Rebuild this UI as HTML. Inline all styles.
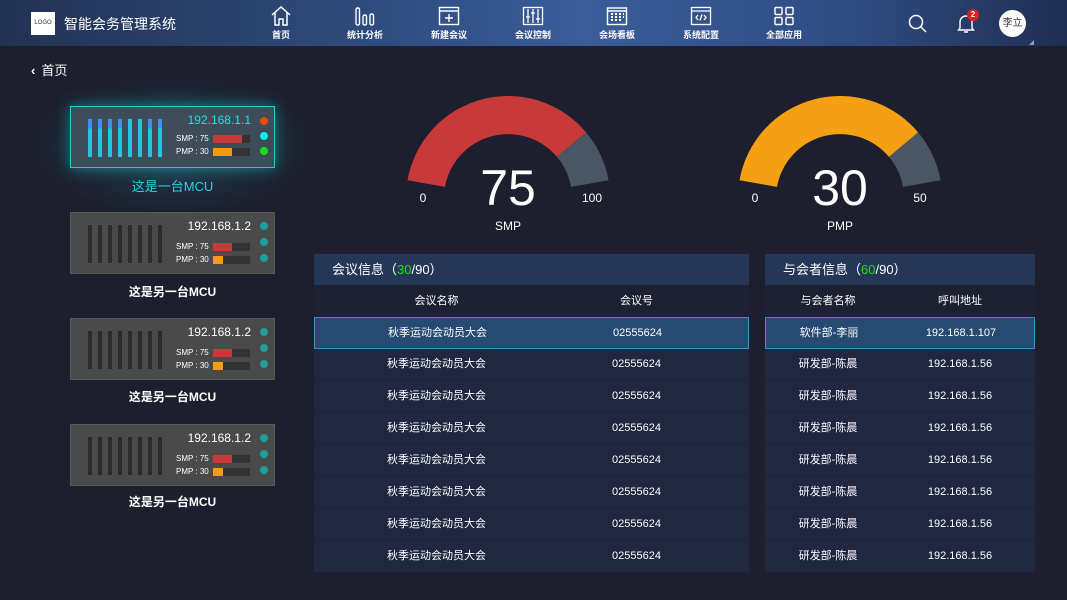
<!DOCTYPE html>
<html><head><meta charset="utf-8"><style>
*{margin:0;padding:0;box-sizing:border-box}
body{width:1067px;height:600px;overflow:hidden;background:#1d1f2e;font-family:"Liberation Sans","Noto Sans CJK SC",sans-serif;color:#fff;position:relative}
.hdr{position:absolute;left:0;top:0;width:1067px;height:46px;background:linear-gradient(90deg,#223253 0%,#2d4878 30%,#3a5c98 55%,#2f4b82 80%,#1f2f52 100%)}
.logo{position:absolute;left:31px;top:12px;width:24px;height:23px;background:#fff;color:#333;font-size:6px;line-height:23px;text-align:center}
.title{position:absolute;left:64px;top:14px;font-size:14px;color:#fff}
.nav{position:absolute;top:6px;width:60px;text-align:center;font-size:9px;font-weight:bold}
.nav svg{display:block;margin:0 auto 2px}
.abs{position:absolute}
.card{position:absolute;left:70px;width:205px;height:62px;background:#4a4a4a;border:1px solid #5a5a5a}
.card .bars{position:absolute;left:17px;top:12px}
.card .bars i{position:absolute;top:0;width:4px;height:38px;background:#2c2c2c}
.ip{position:absolute;right:23px;top:6px;font-size:12px}
.lb{position:absolute;left:105px;font-size:8px}
.bar{position:absolute;left:142px;width:37px;height:8px;background:#333}
.dot{position:absolute;right:6px;width:8px;height:8px;border-radius:50%;background:#1e9e9e}
.cap{position:absolute;left:70px;width:205px;text-align:center;font-size:12px;font-weight:bold}
.tbl{position:absolute;top:254px}
.tt{height:31px;background:#253757;font-size:13px;line-height:31px;padding-left:18px}
.th{height:32px;line-height:32px;font-size:11px;position:relative}
.row{height:32px;line-height:31px;font-size:11px;position:relative;background:#212740;border-bottom:1px solid #1c2135}
.row.sel{background:#264a72;border:1px solid #3a8fd0}
.c{position:absolute;text-align:center}
</style></head><body>
<div class="hdr">
<div class="logo">LOGO</div>
<div class="title">智能会务管理系统</div>
<div class="nav" style="left:251px"><svg width="22" height="20" viewBox="0 0 22 20" fill="none" stroke="#fff" stroke-width="1.5"><path d="M2 9L11 1L20 9M5 7V19H9V13H13V19H17V7"/></svg>首页</div>
<div class="nav" style="left:335px"><svg width="22" height="20" viewBox="0 0 22 20" fill="none" stroke="#fff" stroke-width="1.4"><rect x="2" y="2" width="3.5" height="17" rx="1.5"/><rect x="9" y="9" width="3.5" height="10" rx="1.5"/><rect x="16" y="8" width="3.5" height="11" rx="1.5"/></svg>统计分析</div>
<div class="nav" style="left:419px"><svg width="22" height="20" viewBox="0 0 22 20" fill="none" stroke="#fff" stroke-width="1.4"><rect x="1.5" y="1.5" width="19" height="17"/><path d="M1.5 5H20.5M11 8V16M7 12H15"/></svg>新建会议</div>
<div class="nav" style="left:503px"><svg width="22" height="20" viewBox="0 0 22 20" fill="none" stroke="#fff" stroke-width="1.3"><rect x="1.5" y="1.5" width="19" height="17"/><path d="M6 3V17M11 3V17M16 3V17M4 11H8M9 7H13M14 13H18"/></svg>会议控制</div>
<div class="nav" style="left:587px"><svg width="22" height="20" viewBox="0 0 22 20" fill="none" stroke="#fff" stroke-width="1.4"><rect x="1.5" y="2" width="19" height="16.5"/><path d="M1.5 5H20.5" /><path d="M5 8h2M9 8h2M13 8h2M17 8h1M5 11h2M9 11h2M13 11h2M17 11h1M5 14h2M9 14h2M13 14h2" stroke-width="2"/></svg>会场看板</div>
<div class="nav" style="left:671px"><svg width="22" height="20" viewBox="0 0 22 20" fill="none" stroke="#fff" stroke-width="1.3"><rect x="1.5" y="1.5" width="19" height="17"/><path d="M1.5 5H20.5M8 9L6 11.5L8 14M14 9L16 11.5L14 14M12 8.5L10 14.5"/></svg>系统配置</div>
<div class="nav" style="left:754px"><svg width="22" height="20" viewBox="0 0 22 20" fill="none" stroke="#fff" stroke-width="1.4"><rect x="2" y="1.5" width="7" height="7" rx="1"/><rect x="13" y="1.5" width="7" height="7" rx="1"/><rect x="2" y="11.5" width="7" height="7" rx="1"/><rect x="13" y="11.5" width="7" height="7" rx="1"/></svg>全部应用</div>
<svg class="abs" style="left:908px;top:14px" width="20" height="20" fill="none" stroke="#fff" stroke-width="1.5"><circle cx="8" cy="8" r="6.5"/><path d="M13 13L18 18"/></svg>
<svg class="abs" style="left:956px;top:13px" width="20" height="22" fill="none" stroke="#fff" stroke-width="1.4"><path d="M4 15V9a6 6 0 0 1 12 0v6l1.5 2h-15z M8 19h4"/></svg>
<div class="abs" style="left:967px;top:9px;width:12px;height:12px;border-radius:50%;background:#e21c1c;font-size:8px;font-weight:bold;text-align:center;line-height:12px">2</div>
<div class="abs" style="left:999px;top:10px;width:27px;height:27px;border-radius:50%;background:#fff;color:#333;font-size:10px;text-align:center;line-height:27px">李立</div>
<div class="abs" style="left:1029px;top:40px;width:0;height:0;border-left:5px solid transparent;border-bottom:5px solid #8fa0bf"></div>
</div>

<div class="abs" style="left:31px;top:60px;font-size:13px"><span style="font-weight:bold;margin-right:6px">&#8249;</span>首页</div>

<div class="abs" style="left:40px;top:80px;width:265px;height:130px;background:radial-gradient(ellipse at center,rgba(40,140,160,.45) 0%,rgba(30,90,110,.2) 50%,rgba(29,31,46,0) 75%)"></div>
<div class="card" style="top:106px;background:#3e4b58;border:1px solid #18d2d8;box-shadow:0 0 14px rgba(24,210,216,.5)">
<div class="bars"><i style="left:0;background:linear-gradient(#3a8ff0 25%,#1fc8e0 25%)"></i><i style="left:10px;background:linear-gradient(#3a8ff0 25%,#1fc8e0 25%)"></i><i style="left:20px;background:linear-gradient(#3a8ff0 25%,#1fc8e0 25%)"></i><i style="left:30px;background:linear-gradient(#3a8ff0 25%,#1fc8e0 25%)"></i><i style="left:40px;background:#1fc8e0"></i><i style="left:50px;background:#1fc8e0"></i><i style="left:60px;background:linear-gradient(#3a8ff0 25%,#1fc8e0 25%)"></i><i style="left:70px;background:linear-gradient(#3a8ff0 25%,#1fc8e0 25%)"></i></div>
<div class="ip" style="color:#1fe0e8">192.168.1.1</div>
<div class="lb" style="top:27px">SMP : 75</div><div class="bar" style="top:28px"><div style="width:29px;height:8px;background:#c8393a"></div></div>
<div class="lb" style="top:40px">PMP : 30</div><div class="bar" style="top:41px"><div style="width:19px;height:8px;background:#f59c10"></div></div>
<div class="dot" style="top:10px;background:#f04a0e"></div><div class="dot" style="top:25px;background:#12e8f4"></div><div class="dot" style="top:40px;background:#18e018"></div>
</div>
<div class="cap" style="top:176px;color:#1fd8e2;font-weight:normal;font-size:13px">这是一台MCU</div>

<div class="card" style="top:212px"><div class="bars"><i style="left:0"></i><i style="left:10px"></i><i style="left:20px"></i><i style="left:30px"></i><i style="left:40px"></i><i style="left:50px"></i><i style="left:60px"></i><i style="left:70px"></i></div><div class="ip">192.168.1.2</div><div class="lb" style="top:29px">SMP : 75</div><div class="bar" style="top:30px"><div style="width:19px;height:8px;background:#c8393a"></div></div><div class="lb" style="top:42px">PMP : 30</div><div class="bar" style="top:43px"><div style="width:10px;height:8px;background:#f59c10"></div></div><div class="dot" style="top:9px"></div><div class="dot" style="top:25px"></div><div class="dot" style="top:41px"></div></div>
<div class="cap" style="top:283px">这是另一台MCU</div>
<div class="card" style="top:318px"><div class="bars"><i style="left:0"></i><i style="left:10px"></i><i style="left:20px"></i><i style="left:30px"></i><i style="left:40px"></i><i style="left:50px"></i><i style="left:60px"></i><i style="left:70px"></i></div><div class="ip">192.168.1.2</div><div class="lb" style="top:29px">SMP : 75</div><div class="bar" style="top:30px"><div style="width:19px;height:8px;background:#c8393a"></div></div><div class="lb" style="top:42px">PMP : 30</div><div class="bar" style="top:43px"><div style="width:10px;height:8px;background:#f59c10"></div></div><div class="dot" style="top:9px"></div><div class="dot" style="top:25px"></div><div class="dot" style="top:41px"></div></div>
<div class="cap" style="top:388px">这是另一台MCU</div>
<div class="card" style="top:424px"><div class="bars"><i style="left:0"></i><i style="left:10px"></i><i style="left:20px"></i><i style="left:30px"></i><i style="left:40px"></i><i style="left:50px"></i><i style="left:60px"></i><i style="left:70px"></i></div><div class="ip">192.168.1.2</div><div class="lb" style="top:29px">SMP : 75</div><div class="bar" style="top:30px"><div style="width:19px;height:8px;background:#c8393a"></div></div><div class="lb" style="top:42px">PMP : 30</div><div class="bar" style="top:43px"><div style="width:10px;height:8px;background:#f59c10"></div></div><div class="dot" style="top:9px"></div><div class="dot" style="top:25px"></div><div class="dot" style="top:41px"></div></div>
<div class="cap" style="top:493px">这是另一台MCU</div>

<svg class="abs" style="left:0;top:0" width="1067" height="250">
<g font-family="Liberation Sans, sans-serif" fill="#fff" text-anchor="middle">
<path d="M407.5 180.3A102 102 0 0 1 586.1 132.4L557 156.9A64 64 0 0 0 445 186.9Z" fill="#c8393a"/>
<path d="M586.1 132.4A102 102 0 0 1 608.5 180.3L571 186.9A64 64 0 0 0 557 156.9Z" fill="#4a5663"/>
<text x="508" y="205" font-size="50">75</text>
<text x="423" y="202" font-size="12">0</text><text x="592" y="202" font-size="12">100</text>
<text x="508" y="230" font-size="12">SMP</text>
<g transform="translate(332,0)">
<path d="M407.5 180.3A102 102 0 0 1 586.1 132.4L557 156.9A64 64 0 0 0 445 186.9Z" fill="#f5a012"/>
<path d="M586.1 132.4A102 102 0 0 1 608.5 180.3L571 186.9A64 64 0 0 0 557 156.9Z" fill="#4a5663"/>
<text x="508" y="205" font-size="50">30</text>
<text x="423" y="202" font-size="12">0</text><text x="588" y="202" font-size="12">50</text>
<text x="508" y="230" font-size="12">PMP</text>
</g></g></svg>

<div class="tbl" style="left:314px;width:435px">
<div class="tt">会议信息（<span style="color:#1ee01e">30</span>/90）</div>
<div class="th" style="background:#1d2133"><span class="c" style="left:0;width:245px">会议名称</span><span class="c" style="left:245px;width:155px">会议号</span></div>
<div class="row sel"><span class="c" style="left:0;width:245px">秋季运动会动员大会</span><span class="c" style="left:245px;width:155px">02555624</span></div>
<div class="row"><span class="c" style="left:0;width:245px">秋季运动会动员大会</span><span class="c" style="left:245px;width:155px">02555624</span></div>
<div class="row"><span class="c" style="left:0;width:245px">秋季运动会动员大会</span><span class="c" style="left:245px;width:155px">02555624</span></div>
<div class="row"><span class="c" style="left:0;width:245px">秋季运动会动员大会</span><span class="c" style="left:245px;width:155px">02555624</span></div>
<div class="row"><span class="c" style="left:0;width:245px">秋季运动会动员大会</span><span class="c" style="left:245px;width:155px">02555624</span></div>
<div class="row"><span class="c" style="left:0;width:245px">秋季运动会动员大会</span><span class="c" style="left:245px;width:155px">02555624</span></div>
<div class="row"><span class="c" style="left:0;width:245px">秋季运动会动员大会</span><span class="c" style="left:245px;width:155px">02555624</span></div>
<div class="row"><span class="c" style="left:0;width:245px">秋季运动会动员大会</span><span class="c" style="left:245px;width:155px">02555624</span></div>
</div>

<div class="tbl" style="left:765px;width:270px">
<div class="tt">与会者信息（<span style="color:#1ee01e">60</span>/90）</div>
<div class="th" style="background:#1d2133"><span class="c" style="left:0;width:126px">与会者名称</span><span class="c" style="left:126px;width:138px">呼叫地址</span></div>
<div class="row sel"><span class="c" style="left:0;width:126px">软件部-李丽</span><span class="c" style="left:126px;width:138px">192.168.1.107</span></div>
<div class="row"><span class="c" style="left:0;width:126px">研发部-陈晨</span><span class="c" style="left:126px;width:138px">192.168.1.56</span></div>
<div class="row"><span class="c" style="left:0;width:126px">研发部-陈晨</span><span class="c" style="left:126px;width:138px">192.168.1.56</span></div>
<div class="row"><span class="c" style="left:0;width:126px">研发部-陈晨</span><span class="c" style="left:126px;width:138px">192.168.1.56</span></div>
<div class="row"><span class="c" style="left:0;width:126px">研发部-陈晨</span><span class="c" style="left:126px;width:138px">192.168.1.56</span></div>
<div class="row"><span class="c" style="left:0;width:126px">研发部-陈晨</span><span class="c" style="left:126px;width:138px">192.168.1.56</span></div>
<div class="row"><span class="c" style="left:0;width:126px">研发部-陈晨</span><span class="c" style="left:126px;width:138px">192.168.1.56</span></div>
<div class="row"><span class="c" style="left:0;width:126px">研发部-陈晨</span><span class="c" style="left:126px;width:138px">192.168.1.56</span></div>
</div>
</body></html>
